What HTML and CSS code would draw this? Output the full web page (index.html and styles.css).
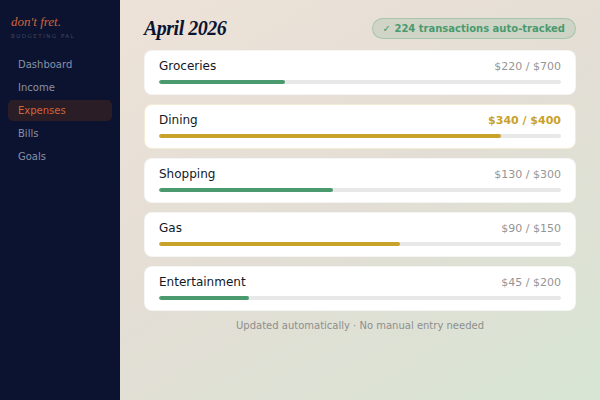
FILE: index.html
```html
<!DOCTYPE html>
<html>
<head>
<meta charset="utf-8">
<link rel="stylesheet" href="styles.css">
</head>
<body>
<div class="app">
  <aside class="sidebar">
    <div class="logo">don't fret.</div>
    <div class="tagline">BUDGETING PAL</div>
    <nav class="nav">
      <div class="nav-item">Dashboard</div>
      <div class="nav-item">Income</div>
      <div class="nav-item active">Expenses</div>
      <div class="nav-item">Bills</div>
      <div class="nav-item">Goals</div>
    </nav>
  </aside>
  <main class="main">
    <header class="header">
      <h1 class="title">April 2026</h1>
      <div class="badge">✓ 224 transactions auto-tracked</div>
    </header>
    <section class="cards">
      <div class="card">
        <div class="row"><span class="name">Groceries</span><span class="amt">$220 / $700</span></div>
        <div class="track"><div class="fill ok" style="width:31.4%"></div></div>
      </div>
      <div class="card warn">
        <div class="row"><span class="name">Dining</span><span class="amt warn-amt">$340 / $400</span></div>
        <div class="track"><div class="fill gold" style="width:85%"></div></div>
      </div>
      <div class="card">
        <div class="row"><span class="name">Shopping</span><span class="amt">$130 / $300</span></div>
        <div class="track"><div class="fill ok" style="width:43.3%"></div></div>
      </div>
      <div class="card">
        <div class="row"><span class="name">Gas</span><span class="amt">$90 / $150</span></div>
        <div class="track"><div class="fill gold" style="width:60%"></div></div>
      </div>
      <div class="card">
        <div class="row"><span class="name">Entertainment</span><span class="amt">$45 / $200</span></div>
        <div class="track"><div class="fill ok" style="width:22.5%"></div></div>
      </div>
    </section>
    <p class="foot">Updated automatically · No manual entry needed</p>
  </main>
</div>
</body>
</html>
```
FILE: styles.css
```css
html, body { margin: 0; padding: 0; }
body { font-family: "DejaVu Sans", sans-serif; width: 600px; height: 400px; overflow: hidden; }
.app { display: flex; width: 600px; height: 400px; }
.sidebar { width: 120px; flex: none; background: #0c1330; padding: 14px 8px 0 8px; box-sizing: border-box; }
.logo { font-family: "Liberation Serif", serif; font-style: italic; font-size: 13px; color: #d0643a; padding-left: 3px; line-height: 16px; }
.tagline { font-size: 5.5px; letter-spacing: 1.5px; color: #3e4661; padding-left: 3px; margin-top: 3px; line-height: 7px; }
.nav { margin-top: 14px; display: flex; flex-direction: column; gap: 2px; }
.nav-item { font-size: 10px; color: #8891a5; height: 21px; line-height: 21px; padding-left: 10px; border-radius: 5px; }
.nav-item.active { background: #2a1d25; color: #d0643a; }
.main { flex: 1; padding: 16px 24px 0 24px; background: linear-gradient(150deg, #ede2d8 0%, #e3ded5 50%, #d7e5d4 100%); box-sizing: border-box; }
.header { display: flex; justify-content: space-between; align-items: center; height: 25px; margin-bottom: 9px; }
.title { margin: 0; font-family: "Liberation Serif", serif; font-style: italic; font-weight: bold; font-size: 20px; letter-spacing: -0.5px; color: #0c1330; }
.badge { font-size: 10px; font-weight: bold; color: #4a9a6e; background: rgba(74,154,110,0.15); border: 1px solid rgba(74,154,110,0.3); border-radius: 11px; height: 19px; line-height: 19px; padding: 0 10px 0 10px; }
.cards { display: flex; flex-direction: column; gap: 9px; }
.card { background: #fff; border-radius: 8px; border: 1px solid rgba(0,0,0,0.04); padding: 8px 14px 10px 14px; height: 45px; box-sizing: border-box; }
.card.warn { border-color: rgba(201,162,42,0.2); }
.row { display: flex; justify-content: space-between; align-items: baseline; height: 16px; }
.name { font-size: 12px; color: #111827; }
.amt { font-size: 11px; color: #959595; }
.warn-amt { color: #c9a22a; font-weight: bold; }
.track { margin-top: 5px; height: 4px; background: #e8e8e8; border-radius: 2px; overflow: hidden; }
.fill { height: 100%; border-radius: 2px; }
.fill.ok { background: #4a9a6e; }
.fill.gold { background: #c9a22a; }
.foot { margin: 9px 0 0 0; text-align: center; font-size: 10px; color: #8e8e8e; }
```
